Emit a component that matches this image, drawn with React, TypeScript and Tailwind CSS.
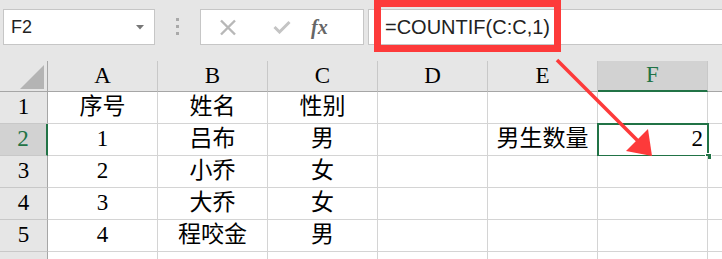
import React from "react";

const COLS = ["A", "B", "C", "D", "E", "F"];

const ROWS: string[][] = [
  ["序号", "姓名", "性别", "", "", ""],
  ["1", "吕布", "男", "", "男生数量", "2"],
  ["2", "小乔", "女", "", "", ""],
  ["3", "大乔", "女", "", "", ""],
  ["4", "程咬金", "男", "", "", ""],
  ["", "", "", "", "", ""],
];

const serif = "font-['Liberation_Serif','Noto_Sans_CJK_SC',serif]";

function Toolbar() {
  return (
    <div className="flex h-[61px] items-start bg-[#e6e6e6] pt-[9px]">
      {/* name box */}
      <div className="ml-[3px] flex h-[36px] w-[152px] items-center justify-between border border-[#c6c6c6] bg-white pl-[7px] pr-[10px]">
        <span className="font-['Liberation_Sans',sans-serif] text-[18px] text-[#222]">F2</span>
        <svg width="8" height="5" viewBox="0 0 8 5">
          <path d="M0 0 L8 0 L4 4.5 Z" fill="#777" />
        </svg>
      </div>
      {/* splitter dots */}
      <div className="flex w-[45px] flex-col items-center gap-[4px] pt-[9px]">
        <span className="h-[3px] w-[3px] bg-[#a9a9a9]" />
        <span className="h-[3px] w-[3px] bg-[#a9a9a9]" />
        <span className="h-[3px] w-[3px] bg-[#a9a9a9]" />
      </div>
      {/* cancel / enter / fx */}
      <div className="flex h-[36px] w-[164px] items-center border border-[#c6c6c6] bg-white">
        <svg className="ml-[18px]" width="18" height="17" viewBox="0 0 18 17">
          <path d="M2 1.5 L16 15.5 M16 1.5 L2 15.5" stroke="#b8b8b8" strokeWidth="2.4" />
        </svg>
        <svg className="ml-[36px]" width="18" height="14" viewBox="0 0 18 14">
          <path d="M1.5 7 L6.5 12 L16.5 2" stroke="#c4c4c4" strokeWidth="3" fill="none" />
        </svg>
        <span className="ml-[20px] font-['Liberation_Serif',serif] text-[20px] font-bold italic leading-none text-[#666]">
          fx
        </span>
      </div>
      {/* formula bar */}
      <div className="ml-[4px] flex h-[36px] flex-1 items-center border border-r-0 border-[#c6c6c6] bg-white pl-[16px]">
        <span className="font-['Liberation_Sans',sans-serif] text-[20px] text-[#222]">=COUNTIF(C:C,1)</span>
      </div>
    </div>
  );
}

function HeaderRow() {
  return (
    <div className="flex h-[31px]">
      <div className="relative w-[48px] shrink-0 border-r border-b border-[#a6a6a6] bg-[#e6e6e6]">
        <svg className="absolute left-[20px] top-[4px]" width="24" height="24" viewBox="0 0 24 24">
          <path d="M24 0 L24 24 L0 24 Z" fill="#b4b4b4" />
        </svg>
      </div>
      {COLS.map((c) => {
        const active = c === "F";
        return (
          <div
            key={c}
            className={
              active
                ? `flex w-[110px] shrink-0 items-center justify-center border-r border-r-[#c8c8c8] border-b-2 border-b-[#217346] bg-[#d2d2d2] text-[23px] text-[#217346] ${serif}`
                : `flex w-[110px] shrink-0 items-center justify-center border-r border-r-[#c8c8c8] border-b border-b-[#a6a6a6] bg-[#e6e6e6] text-[23px] text-black ${serif}`
            }
          >
            {c}
          </div>
        );
      })}
      <div className="flex-1 border-b border-[#a6a6a6] bg-[#e6e6e6]" />
    </div>
  );
}

function DataRow({ cells, index }: { cells: string[]; index: number }) {
  const active = index === 2;
  // the last row is only a sliver at the window edge; its number is out of view
  const label = index <= 5 ? String(index) : "";
  return (
    <div className="flex h-[32px]">
      <div
        className={
          active
            ? `flex w-[48px] shrink-0 items-center justify-center border-r-2 border-r-[#217346] border-b border-b-[#c8c8c8] bg-[#d2d2d2] text-[23px] text-[#217346] ${serif}`
            : `flex w-[48px] shrink-0 items-center justify-center border-r border-r-[#a6a6a6] border-b border-b-[#c8c8c8] bg-[#e6e6e6] text-[23px] text-black ${serif}`
        }
      >
        {label}
      </div>
      {cells.map((v, i) => {
        const selected = active && i === 5;
        return (
          <div
            key={i}
            className={`relative flex w-[110px] shrink-0 items-center border-r border-b border-[#d4d4d4] bg-white text-[23px] text-black ${serif} ${
              selected ? "justify-end pr-[4px]" : "justify-center"
            }`}
          >
            {v}
            {selected && (
              <>
                <div className="absolute -left-px -top-px -right-[2px] -bottom-[2px] border-2 border-[#217346]" />
                <div className="absolute -right-[5px] -bottom-[5px] h-[7px] w-[7px] border border-white bg-[#217346]" />
              </>
            )}
          </div>
        );
      })}
      <div className="flex-1 border-b border-[#d4d4d4] bg-white" />
    </div>
  );
}

export default function App() {
  return (
    <div className="relative h-[259px] w-[722px] overflow-hidden bg-white">
      <Toolbar />
      <HeaderRow />
      {ROWS.map((r, i) => (
        <DataRow key={i} cells={r} index={i + 1} />
      ))}

      {/* annotation: highlight box */}
      <div className="pointer-events-none absolute left-[374px] top-0 h-[52px] w-[187px] border-[7px] border-[#fd3a3a]" />
      {/* annotation: arrow */}
      <svg className="pointer-events-none absolute left-0 top-0" width="722" height="259" viewBox="0 0 722 259">
        <line x1="557" y1="60" x2="638" y2="141" stroke="#fd3a3a" strokeWidth="3.5" />
        <path d="M652 156 L626 151 L648 129 Z" fill="#fd3a3a" />
      </svg>
    </div>
  );
}
